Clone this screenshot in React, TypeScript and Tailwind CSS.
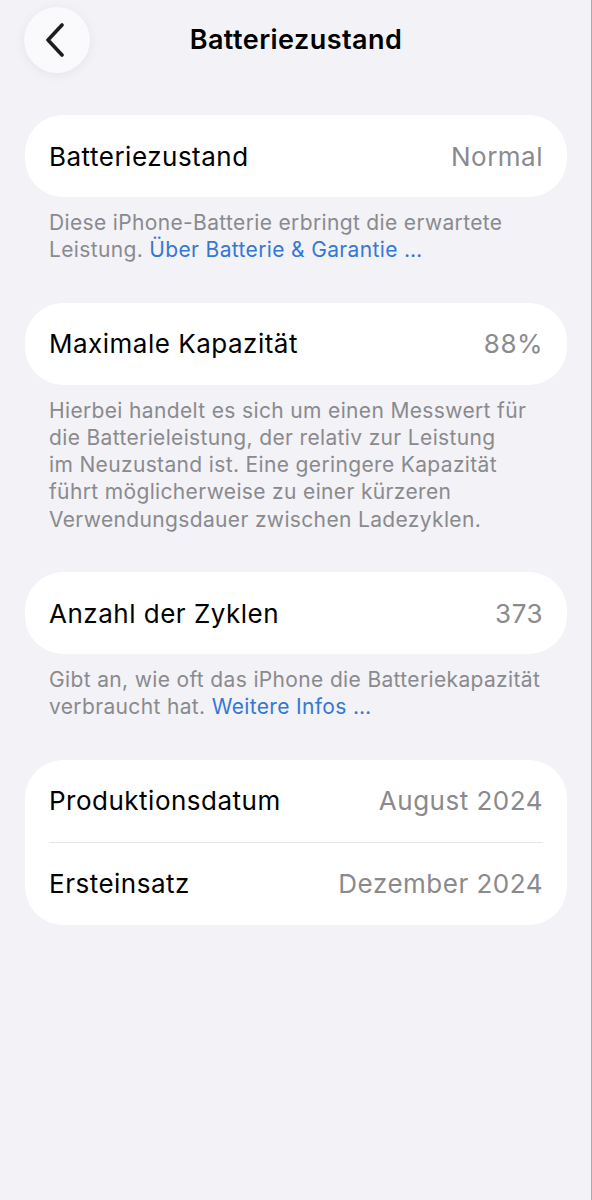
import React from "react";

const font = { fontFamily: "Inter, 'Noto Sans', sans-serif" };

function Row({ label, value }: { label: string; value: string }) {
  return (
    <div className="flex h-[82px] items-center justify-between px-[24px]">
      <span className="text-[26px] tracking-[0.5px] text-black">{label}</span>
      <span className="text-[26px] tracking-[0.5px] text-[#8a8a8e]">{value}</span>
    </div>
  );
}

function Card({ children }: { children: React.ReactNode }) {
  return <div className="mx-[25px] overflow-hidden rounded-[38px] bg-white">{children}</div>;
}

function Footer({ children }: { children: React.ReactNode }) {
  return (
    <p className="mt-[12px] mb-[39px] px-[49px] text-[21px] leading-[27.3px] tracking-[0.35px] text-[#8a8a8e]">
      {children}
    </p>
  );
}

export default function App() {
  return (
    <div className="relative min-h-[1200px] w-full bg-[#f2f2f7]" style={font}>
      {/* header */}
      <div className="relative flex h-[115px] items-start pt-[7px] pl-[24px]">
        <button className="flex h-[66px] w-[66px] items-center justify-center rounded-full bg-[#fafafc] shadow-[0_2px_12px_rgba(0,0,0,0.06)]">
          <svg width="20" height="34" viewBox="0 0 20 34" fill="none" className="-ml-[3px]">
            <path d="M16 2 L2 17 L16 32" stroke="#1c1c1e" strokeWidth="3.6" strokeLinecap="round" strokeLinejoin="round" />
          </svg>
        </button>
        <h1 className="absolute left-0 right-0 top-[20px] text-center text-[27px] font-semibold tracking-[0.45px] text-black">
          Batteriezustand
        </h1>
      </div>

      <Card>
        <Row label="Batteriezustand" value="Normal" />
      </Card>
      <Footer>
        Diese iPhone-Batterie erbringt die erwartete
        <br />
        Leistung. <span className="text-[#3478d4]">Über Batterie &amp; Garantie …</span>
      </Footer>

      <Card>
        <Row label="Maximale Kapazität" value="88%" />
      </Card>
      <Footer>
        Hierbei handelt es sich um einen Messwert für
        <br />
        die Batterieleistung, der relativ zur Leistung
        <br />
        im Neuzustand ist. Eine geringere Kapazität
        <br />
        führt möglicherweise zu einer kürzeren
        <br />
        Verwendungsdauer zwischen Ladezyklen.
      </Footer>

      <Card>
        <Row label="Anzahl der Zyklen" value="373" />
      </Card>
      <Footer>
        Gibt an, wie oft das iPhone die Batteriekapazität
        <br />
        verbraucht hat. <span className="text-[#3478d4]">Weitere Infos …</span>
      </Footer>

      <Card>
        <Row label="Produktionsdatum" value="August 2024" />
        <div className="mx-[24px] h-px bg-[#e3e3e8]" />
        <Row label="Ersteinsatz" value="Dezember 2024" />
      </Card>

      {/* thin edge line on the right */}
      <div className="absolute right-0 top-0 h-full w-px bg-[#a9a9ae]" />
    </div>
  );
}
